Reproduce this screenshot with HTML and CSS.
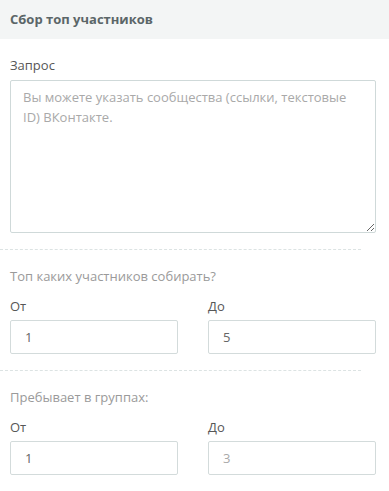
FILE: index.html
```html
<!DOCTYPE html>
<html lang="ru">
<head>
    <meta charset="UTF-8">
    <meta name="viewport" content="width=device-width, initial-scale=1.0">
    <title>Сбор топ участников</title>
    <link rel="stylesheet" href="styles.css">
</head>
<body>
    <div class="panel">
        <div class="panel-header">Сбор топ участников</div>
        <div class="panel-body">
            <div class="field">
                <label class="label">Запрос</label>
                <textarea class="textarea" placeholder="Вы можете указать сообщества (ссылки, текстовые ID) ВКонтакте."></textarea>
            </div>

            <div class="divider"></div>

            <div class="group-title">Топ каких участников собирать?</div>
            <div class="row">
                <div class="col">
                    <label class="label">От</label>
                    <input class="input" type="text" value="1">
                </div>
                <div class="col">
                    <label class="label">До</label>
                    <input class="input" type="text" value="5">
                </div>
            </div>

            <div class="divider"></div>

            <div class="group-title">Пребывает в группах:</div>
            <div class="row">
                <div class="col">
                    <label class="label">От</label>
                    <input class="input" type="text" value="1">
                </div>
                <div class="col">
                    <label class="label">До</label>
                    <input class="input" type="text" placeholder="3">
                </div>
            </div>
        </div>
    </div>
</body>
</html>
```

FILE: styles.css
```css
body {
    margin: 0;
    background: #fff;
    font-family: "Open Sans", "Noto Sans", sans-serif;
    font-size: 13px;
    color: #555;
}
.panel {
    width: 389px;
}
.panel-header {
    height: 39px;
    line-height: 38px;
    padding-left: 10px;
    background: #f3f5f5;
    font-weight: bold;
    color: #5b6668;
}
.panel-body {
    padding: 16px 13px 0 10px;
}
.label {
    display: block;
    line-height: 20px;
    margin-bottom: 4px;
    color: #575757;
}
.field .label {
    margin-bottom: 5px;
}
.textarea {
    display: block;
    box-sizing: border-box;
    width: 100%;
    height: 153px;
    padding: 6px 12px;
    border: 1px solid #cfd9d9;
    border-radius: 2px;
    font-family: inherit;
    font-size: 13px;
    line-height: 20px;
    color: #555;
    resize: vertical;
}
.textarea::placeholder,
.input::placeholder {
    color: #a9a9a9;
}
.divider {
    width: 361px;
    margin: 16px 0 16px -10px;
    border-top: 1px dashed #dce3e3;
}
.group-title {
    line-height: 20px;
    color: #9a9a9a;
    margin-bottom: 10px;
}
.row {
    display: flex;
    gap: 30px;
}
.col {
    flex: 1;
}
.input {
    display: block;
    box-sizing: border-box;
    width: 100%;
    height: 34px;
    padding: 0 14px;
    border: 1px solid #d3dbdb;
    border-radius: 2px;
    font-family: inherit;
    font-size: 13px;
    color: #666;
}
```
